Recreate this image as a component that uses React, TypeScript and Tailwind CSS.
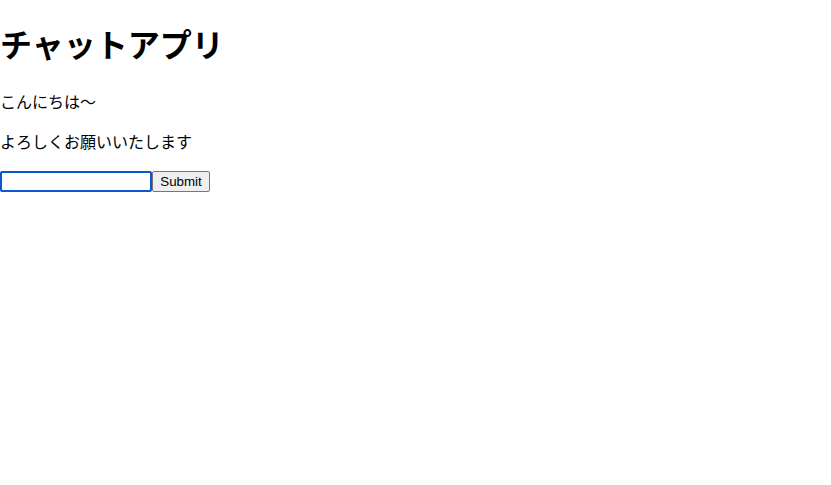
import { useState } from "react";

export default function App() {
  const [messages] = useState(["こんにちは〜", "よろしくお願いいたします"]);
  const [text, setText] = useState("");

  return (
    <div className="bg-white text-black min-h-screen pt-[2px]" style={{ fontFamily: '"Liberation Sans", "Noto Sans CJK JP", sans-serif' }}>
      <h1 className="text-[32px] font-bold leading-[46px] my-[21.44px]">チャットアプリ</h1>
      {messages.map((m, i) => (
        <p key={i} className="text-base leading-[24px] my-4">
          {m}
        </p>
      ))}
      <form className="flex items-start" onSubmit={(e) => e.preventDefault()}>
        <input
          type="text"
          value={text}
          onChange={(e) => setText(e.target.value)}
          className="w-[152px] h-[21px] border-2 border-[#0b57d0] rounded-[2px] px-[2px] text-[13.33px] outline-none bg-white"
        />
        <button
          type="submit"
          className="h-[21px] w-[58px] border border-[#767676] rounded-[2px] bg-[#efefef] text-[13.33px] leading-none"
        >
          Submit
        </button>
      </form>
    </div>
  );
}
